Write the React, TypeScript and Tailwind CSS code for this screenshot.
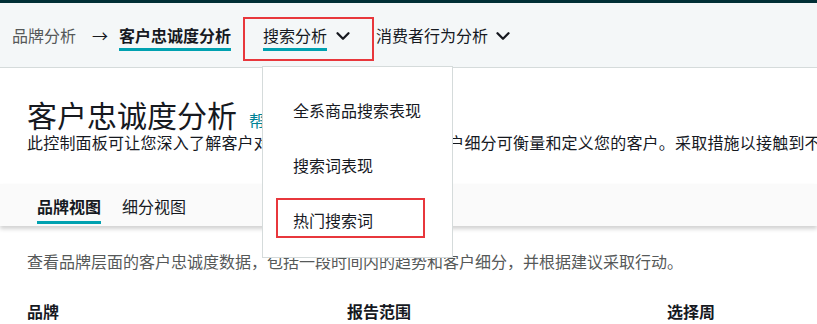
import { ChevronDown } from 'lucide-react';

const menuItems = ['全系商品搜索表现', '搜索词表现', '热门搜索词'];

export default function App() {
  return (
    <div className="relative w-[817px] h-[324px] overflow-hidden bg-white font-['Noto_Sans_CJK_SC','Noto_Sans',sans-serif] text-[#16191f]">
      <div className="h-[3px] bg-[#002f36]" />
      <nav className="h-[65px] bg-[#f4f7f8] border-b border-[#d5dbdb] flex items-center pl-3 text-[16px]">
        <NavItem label="品牌分析" muted />
        <span className="ml-4 mr-[11px] text-[#16191f]">→</span>
        <NavItem label="客户忠诚度分析" active bold />
        <div className="ml-[32px] flex items-center">
          <NavItem label="搜索分析" active />
          <ChevronDown size={22} strokeWidth={2.5} className="ml-[5px] mt-[2px]" />
        </div>
        <div className="ml-[22px] flex items-center">
          <NavItem label="消费者行为分析" />
          <ChevronDown size={22} strokeWidth={2.5} className="ml-[4px] mt-[2px]" />
        </div>
      </nav>

      <div className="px-[27px] pt-[29px]">
        <div className="flex items-baseline whitespace-nowrap">
          <h1 className="text-[30px] leading-[34px]">客户忠诚度分析</h1>
          <span className="ml-3 text-[16px] text-[#008296]">帮助</span>
        </div>
        <p className="text-[16px] leading-5 tracking-[0.2px] whitespace-nowrap">
          此控制面板可让您深入了解客户对您品牌的忠诚度。通过客户细分可衡量和定义您的客户。采取措施以接触到不同细分中的客户。
        </p>
      </div>

      <div className="mt-8 h-[42px] bg-[#fafafa] shadow-[0_3px_4px_rgba(0,0,0,0.18)] flex gap-[21px] pl-[37px] pt-[10px] text-[16px]">
        <div className="font-bold leading-6 pb-[3px] border-b-[3px] border-[#00a1b0] h-[30px]">品牌视图</div>
        <div className="leading-6 pb-[3px] border-b-[3px] border-transparent h-[30px]">细分视图</div>
      </div>

      <div className="px-[27px]">
        <p className="mt-[23px] text-[16px] leading-6 text-[#565959] whitespace-nowrap">
          查看品牌层面的客户忠诚度数据，包括一段时间内的趋势和客户细分，并根据建议采取行动。
        </p>
        <div className="mt-[26px] grid grid-cols-[320px_320px_320px] text-[16px] leading-6 font-bold">
          <div>品牌</div>
          <div>报告范围</div>
          <div>选择周</div>
        </div>
      </div>

      {/* open dropdown of 搜索分析 */}
      <div className="absolute left-[262px] top-[66px] w-[191px] h-[192px] bg-white border border-[#d5dbdb] py-[15px] text-[16px]">
        {menuItems.map((m) => (
          <div key={m} className="h-[55px] flex items-center pl-[30px] whitespace-nowrap">
            {m}
          </div>
        ))}
      </div>

      {/* red annotation boxes */}
      <div className="absolute left-[243px] top-[17px] w-[131px] h-[44px] border-2 border-[#e8373c]" />
      <div className="absolute left-[276px] top-[198px] w-[149px] h-[40px] border-2 border-[#e8373c]" />
    </div>
  );
}

function NavItem({ label, active = false, bold = false, muted = false }: { label: string; active?: boolean; bold?: boolean; muted?: boolean }) {
  return (
    <div
      className={`pt-[4px] pb-[1px] border-b-[3px] leading-6 whitespace-nowrap ${active ? 'border-[#00a1b0]' : 'border-transparent'} ${bold ? 'font-bold' : ''} ${muted ? 'text-[#565959]' : ''}`}
    >
      {label}
    </div>
  );
}
